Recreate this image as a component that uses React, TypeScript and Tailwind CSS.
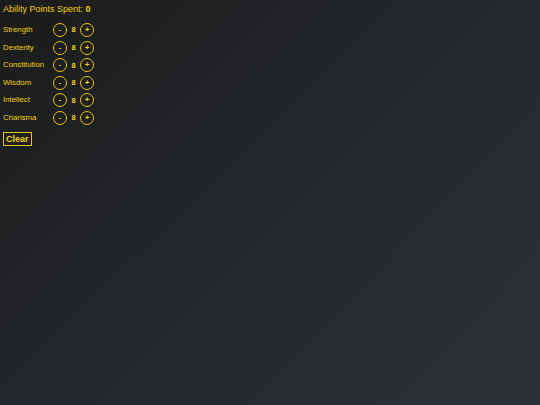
import { useState } from "react";

const ABILITIES = ["Strength", "Dexterity", "Constitution", "Wisdom", "Intellect", "Charisma"];

export default function App() {
  const [scores, setScores] = useState<number[]>(ABILITIES.map(() => 8));
  const spent = scores.reduce((sum, s) => sum + (s - 8), 0);

  const change = (i: number, d: number) => {
    setScores(prev => prev.map((s, j) => (j === i ? Math.max(8, Math.min(15, s + d)) : s)));
  };

  return (
    <div
      className="min-h-screen w-full bg-[linear-gradient(135deg,#1b1b1b_0%,#23262a_45%,#2c3035_100%)] text-[#f2d012] px-[3px] pt-[3px]"
      style={{ fontFamily: '"Liberation Sans", Arial, sans-serif' }}
    >
      <div className="text-[9px] leading-[12px] mb-[8px]">
        Ability Points Spent: <span className="font-bold">{spent}</span>
      </div>
      <div className="flex flex-col gap-[3.6px]">
        {ABILITIES.map((name, i) => (
          <div key={name} className="flex items-center h-[14px]">
            <span className="w-[50px] text-[7.8px] leading-[10px]">{name}</span>
            <button
              onClick={() => change(i, -1)}
              className="w-[14px] h-[14px] rounded-full border-[1.5px] border-[#e8c414] flex items-center justify-center text-[8px] font-bold leading-none"
            >
              -
            </button>
            <span className="w-[13px] text-center text-[7.5px] font-bold">{scores[i]}</span>
            <button
              onClick={() => change(i, 1)}
              className="w-[14px] h-[14px] rounded-full border-[1.5px] border-[#e8c414] flex items-center justify-center text-[8px] font-bold leading-none"
            >
              +
            </button>
          </div>
        ))}
      </div>
      <button
        onClick={() => setScores(ABILITIES.map(() => 8))}
        className="mt-[6px] border-[1.5px] border-[#e8c414] px-[2px] h-[14px] text-[9px] font-bold leading-none"
      >
        Clear
      </button>
    </div>
  );
}
